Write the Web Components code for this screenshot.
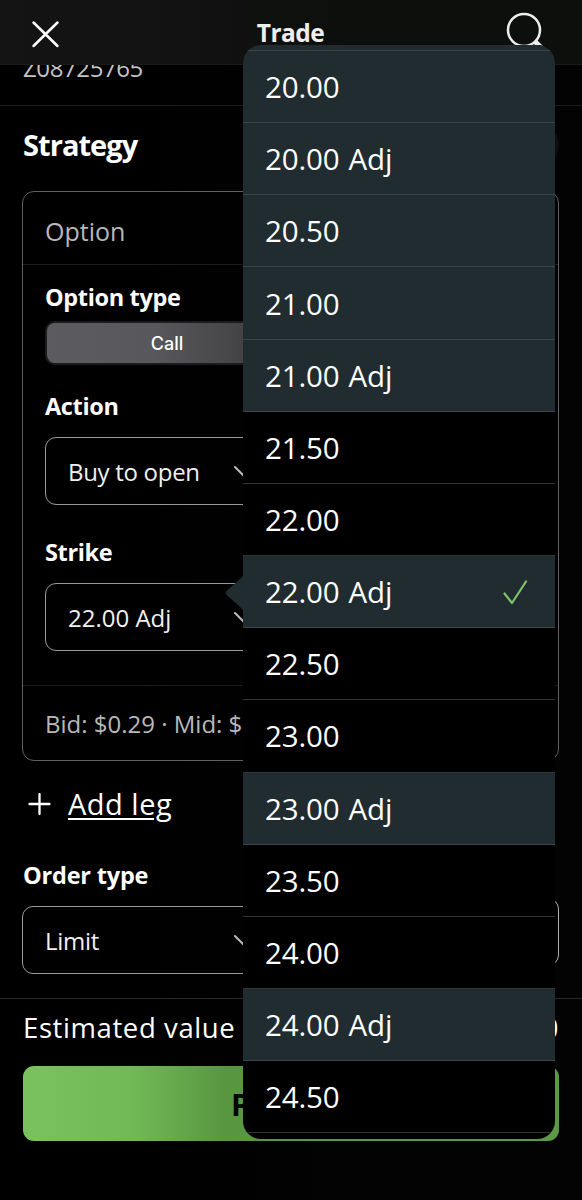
<!DOCTYPE html>
<html lang="en">
<head>
<meta charset="utf-8">
<title>Trade</title>
<style>
  body {
    margin: 0;
    background: #000;
    color: #fff;
    font-family: "Open Sans", "Noto Sans", sans-serif;
  }
</style>
</head>
<body>
<trade-screen></trade-screen>

<script>
const define = (name, html, setup) => {
    const template = document.createElement('template');
    template.innerHTML = html;
    customElements.define(name, class extends HTMLElement {
        constructor() {
            super();
            this.attachShadow({mode: 'open'})
                .appendChild(template.content.cloneNode(true));
        }

        connectedCallback() {
            if (setup) setup(this, this.shadowRoot);
        }
    });
};

define('nav-bar', `
  <style>
    :host {
        display: flex;
        justify-content: space-between;
        box-sizing: border-box;
        height: 65px;
        padding: 11px 36px 0 29px;
        background: linear-gradient(90deg, #141414, #111211 30%, #0d0f0d 60%);
        border-bottom: 1px solid #191a19;
    }

    svg {
        display: block;
        fill: none;
        stroke: #fff;
    }

    .title {
        margin: 5px 0 0 12px;
        font-size: 24.500px;
        line-height: 34px;
        font-weight: 700;
        letter-spacing: -.5px;
        color: #eee;
    }
  </style>
  <svg width="34" height="46"><path d="M4.500 11.500 28.500 35M28.500 11.500 4.500 35" stroke-width="2.500" stroke-linecap="round"/></svg>
  <span class="title"><slot></slot></span>
  <svg width="40" height="46"><circle cx="18" cy="19" r="16" stroke-width="2.500" stroke="#eee"/><path d="m28.500 30 10 10" stroke-width="5" stroke="#eee"/></svg>
`);

define('select-box', `
  <style>
    :host {
        display: flex;
        align-items: center;
        box-sizing: border-box;
        width: 226px;
        height: 68px;
        padding: 1px 14px 0 22px;
        border: 1px solid #999;
        border-radius: 11px;
        font-size: 24px;
        letter-spacing: -.3px;
        color: #f0f0f0;
    }

    svg {
        margin-left: auto;
        fill: none;
        stroke: #bbb;
        stroke-width: 2;
        stroke-linecap: round;
    }
  </style>
  <slot></slot>
  <svg width="22" height="14"><path d="m1 2 10 10 10-10"/></svg>
`);

define('segment-control', `
  <style>
    :host {
        display: flex;
        box-sizing: border-box;
        height: 44px;
        padding: 2px;
        background: #1c1c1e;
        border-radius: 10px;
    }

    .active {
        width: 240px;
        border-radius: 8px;
        background: linear-gradient(90deg, #5c5b60, #58575b 45%, #434345 82%);
        font: 500 18px/41px Inter, sans-serif;
        text-align: center;
    }
  </style>
  <div class="active"><slot></slot></div>
`);

define('strategy-card', `
  <style>
    :host {
        display: flex;
        flex-direction: column;
        box-sizing: border-box;
        height: 570px;
        margin: 0 23px 0 22px;
        border: 1px solid #606060;
        border-radius: 12px;
    }

    header, footer {
        box-sizing: border-box;
        padding: 0 22px;
        font-size: 25px;
        color: #b8b8b8;
    }

    header {
        height: 73px;
        line-height: 78px;
        border-bottom: 1px solid #1c1c1c;
    }

    main {
        flex: 1;
        padding: 0 22px;
    }

    footer {
        height: 75px;
        line-height: 75px;
        font-size: 24px;
        white-space: nowrap;
        border-top: 1px solid #1c1c1c;
    }
  </style>
  <header><slot name="title"></slot></header>
  <main><slot></slot></main>
  <footer><slot name="quote"></slot></footer>
`);

define('strike-option', `
  <style>
    :host {
        display: flex;
        align-items: center;
        box-sizing: border-box;
        height: 72.160px;
        padding: 0 26px 0 22px;
        border-bottom: 1px solid #323536;
        font-size: 29.500px;
        letter-spacing: -.15px;
        word-spacing: 1.500px;
    }

    :host([adjusted]) {
        background: #202c30;
        border-color: #3c4649;
    }

    svg {
        display: none;
        margin-left: auto;
        fill: none;
        stroke: #7fc366;
        stroke-width: 2.200;
        stroke-linecap: round;
        stroke-linejoin: round;
    }

    :host([selected]) svg { display: block; }
  </style>
  <slot></slot>
  <svg width="26" height="26"><path d="M1.500 14.500 9 24 23 2.500"/></svg>
`);

define('strike-menu', `
  <style>
    :host { display: block; }

    .list {
        box-sizing: border-box;
        height: 1093.500px;
        overflow: hidden;
        border-radius: 18px;
        background: #000;
    }

    /* tail end of the row scrolled above the first one */
    .edge {
        height: 5px;
        background: #202c30;
        border-bottom: 1px solid #3c4649;
    }

    .arrow {
        position: absolute;
        left: -18px;
        top: 529px;
        fill: #202c30;
    }
  </style>
  <svg class="arrow" width="19" height="38"><path d="M19 0Q17.500 3 14 6L2.500 16Q-1 19 2.500 22L14 32Q17.500 35 19 38Z"/></svg>
  <div class="list">
    <div class="edge"></div>
    <div id="rows"></div>
  </div>
`, (host, shadow) => {
    const strikes = [
        '20.00', '20.00 Adj', '20.50', '21.00', '21.00 Adj',
        '21.50', '22.00', '22.00 Adj', '22.50', '23.00',
        '23.00 Adj', '23.50', '24.00', '24.00 Adj', '24.50'
    ];
    const rows = shadow.getElementById('rows');
    strikes.forEach((strike, i) => {
        const row = document.createElement('strike-option');
        row.textContent = strike;
        row.toggleAttribute('adjusted', i < 5 || strike.endsWith('Adj'));
        row.toggleAttribute('selected', strike === host.getAttribute('value'));
        rows.appendChild(row);
    });
});

define('trade-screen', `
  <style>
    :host {
        display: block;
        position: relative;
        height: 1200px;
        overflow: hidden;
        background: linear-gradient(90deg, #000 25%, #020302 60%);
    }

    .account {
        box-sizing: border-box;
        height: 41px;
        padding-left: 23px;
        overflow: hidden;
        border-bottom: 1px solid #1c1c1c;
        color: #c4c4c4;
        font-size: 24px;
    }

    .account span {
        display: block;
        margin-top: -14px;
        line-height: 34px;
        letter-spacing: -.4px;
    }

    .heading {
        display: flex;
        align-items: center;
        justify-content: space-between;
        height: 85px;
        padding: 0 23px;
    }

    h2 {
        margin: -7px 0 0;
        font-size: 29px;
        line-height: 40px;
        font-weight: 700;
        letter-spacing: -.95px;
    }

    .round {
        width: 44px;
        height: 44px;
        margin-top: -8px;
        border-radius: 50%;
        background: #0d0f0e;
    }

    h3 {
        margin: 0;
        font-size: 23.500px;
        line-height: 32px;
        font-weight: 700;
        letter-spacing: -.35px;
    }

    .type { padding: 16px 0 8px; }
    .action { padding: 25px 0 15px; }
    .strike { padding: 31px 0 15px; }

    .add {
        display: flex;
        align-items: center;
        gap: 17px;
        height: 87px;
        padding-left: 28px;
        font-size: 29px;
        letter-spacing: .5px;
        text-decoration: underline;
        text-decoration-thickness: 2px;
        text-underline-offset: 3px;
    }

    .add span { margin-top: -2px; }

    .add svg {
        stroke: #fff;
        stroke-width: 2.300;
        stroke-linecap: round;
    }

    .order {
        display: flex;
        justify-content: space-between;
        height: 150px;
        padding: 0 23px 0 22px;
    }

    .order h3 {
        padding: 11px 0 15px 1px;
        letter-spacing: -.2px;
    }

    .price {
        box-sizing: border-box;
        width: 240px;
        height: 68px;
        margin-top: 50px;
        border: 1px solid #b0b0b0;
        border-radius: 11px;
    }

    .value {
        display: flex;
        justify-content: space-between;
        box-sizing: border-box;
        height: 68px;
        padding: 9px 23px 0;
        border-top: 1px solid #292929;
        font-size: 27.500px;
        line-height: 40px;
        letter-spacing: .6px;
    }

    button {
        display: block;
        width: 536px;
        height: 75px;
        margin: 0 23px;
        padding: 0;
        border: 0;
        border-radius: 11px;
        background: linear-gradient(90deg, #7ac25f, #71b957 20%, #589640 38%, #5b9945);
        font: 700 30px/77px "Open Sans", sans-serif;
        color: #050505;
    }

    strike-menu {
        position: absolute;
        left: 243px;
        top: 45px;
        width: 312px;
    }
  </style>
  <nav-bar>Trade</nav-bar>
  <div class="account"><span>Z08725765</span></div>
  <div class="heading"><h2>Strategy</h2><div class="round"></div></div>
  <strategy-card>
    <span slot="title">Option</span>
    <h3 class="type">Option type</h3>
    <segment-control>Call</segment-control>
    <h3 class="action">Action</h3>
    <select-box>Buy to open</select-box>
    <h3 class="strike">Strike</h3>
    <select-box style="letter-spacing: 0">22.00 Adj</select-box>
    <span slot="quote">Bid: $0.29 · Mid: $</span>
  </strategy-card>
  <div class="add">
    <svg width="23" height="24"><path d="M1.500 11h20M11.500 1v20"/></svg>
    <span>Add leg</span>
  </div>
  <div class="order">
    <div>
      <h3>Order type</h3>
      <select-box style="width: 249px">Limit</select-box>
    </div>
    <div class="price"></div>
  </div>
  <div class="value"><span>Estimated value</span><span>$0</span></div>
  <button>Preview</button>
  <strike-menu value="22.00 Adj"></strike-menu>
`);
</script>
</body>
</html>
